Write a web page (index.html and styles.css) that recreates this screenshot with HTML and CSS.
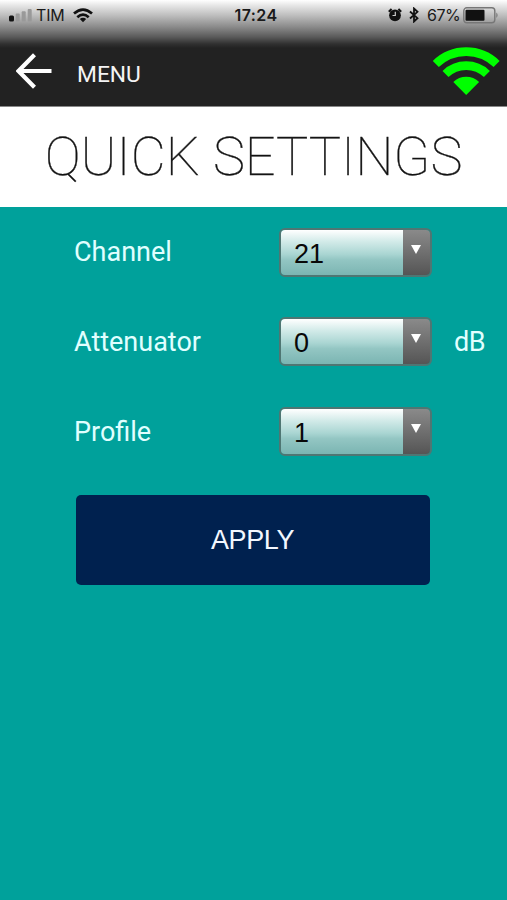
FILE: index.html
```html
<!DOCTYPE html>
<html lang="en">
<head>
<meta charset="utf-8">
<title>Quick Settings</title>
<link rel="stylesheet" href="styles.css">
</head>
<body>
<div class="top">
  <div class="status">
    <div class="status-left">
      <svg class="signal" width="24" height="14" viewBox="0 0 24 14"><rect x="0" y="7.5" width="5" height="6" rx="1.5" fill="#111"/><g fill="#999"><rect x="6.7" y="5.5" width="4" height="8" rx="1"/><rect x="12.7" y="3.2" width="4" height="10.3" rx="1"/><rect x="18.7" y="1" width="4" height="12.5" rx="1"/></g></svg>
      <span class="carrier">TIM</span>
      <svg class="wifi-small" width="20" height="15" viewBox="0 0 20 15"><g fill="none" stroke="#111" stroke-width="2.700"><path d="M1 5.6Q10-2.300 19 5.6"/><path d="M4.3 9.200Q10 4 15.7 9.200"/></g><path d="M6.8 11Q10 8.300 13.200 11L10 14.300Z" fill="#111"/></svg>
    </div>
    <div class="clock">17:24</div>
    <div class="status-right">
      <svg class="alarm" width="14" height="14" viewBox="0 0 14 14"><circle cx="7" cy="7.300" r="5.900" fill="#111"/><path d="M.8 3.800L3.600 1M13.200 3.800L10.400 1" stroke="#111" stroke-width="2"/><path d="M7.300 3.800V7.500H4.500" fill="none" stroke="#ccc" stroke-width="1.200"/></svg>
      <svg class="bluetooth" width="10" height="16" viewBox="0 0 10 16"><path d="M1 4.500L8.500 11.200L5 14.500V1.500L8.500 4.800L1 11.500" fill="none" stroke="#111" stroke-width="1.800"/></svg>
      <span class="percent">67%</span>
      <svg class="battery" width="36" height="17" viewBox="0 0 36 17"><rect x=".8" y=".8" width="31" height="15" rx="3" fill="none" stroke="#777" stroke-width="1.400"/><rect x="2.500" y="2.800" width="19" height="11" rx="1" fill="#111"/><path d="M33.300 5.500Q36 8.200 33.300 11Z" fill="#777"/></svg>
    </div>
  </div>
  <div class="nav">
    <svg class="back" width="36" height="36" viewBox="0 0 36 36"><path d="M35.500 18H2.500M18.500 1.700L2.500 18L18.500 34.300" fill="none" stroke="#fff" stroke-width="4.200"/></svg>
    <span class="menu">MENU</span>
    <svg class="wifi" width="68" height="50" viewBox="432 46 68 50"><g fill="none" stroke="#0f0"><path d="M435.800 64A43.600 43.600 0 0 1 496.600 64" stroke-width="8.600"/><path d="M445.500 74A29.800 29.800 0 0 1 486.900 74" stroke-width="8.600"/></g><path d="M453.300 82A18.300 18.300 0 0 1 479.100 82L466.200 95Z" fill="#0f0"/></svg>
  </div>
</div>
<h1 class="title"><span>QUICK SETTINGS</span></h1>
<main class="form">
  <div class="row"><span class="label">Channel</span><div class="select"><span class="value">21</span><span class="drop"><i class="tri"></i></span></div></div>
  <div class="row"><span class="label">Attenuator</span><div class="select"><span class="value">0</span><span class="drop"><i class="tri"></i></span></div><span class="unit">dB</span></div>
  <div class="row"><span class="label profile">Profile</span><div class="select"><span class="value">1</span><span class="drop"><i class="tri"></i></span></div></div>
  <button class="apply">APPLY</button>
</main>
</body>
</html>
```

FILE: styles.css
```css
* { box-sizing: border-box; }
body { margin: 0; height: 900px; overflow: hidden; background: #00a19b; font-family: Roboto, sans-serif; }
svg { display: block; flex: none; }
.top { height: 107px; border-bottom: 1px solid #888; background: linear-gradient(#fff 0, #e4e4e4 6px, #bbb 16px, #8a8a8a 27px, #5a5a5a 37px, #303030 44px, #222 48px); }
.status { height: 45px; padding-top: 4px; display: grid; grid-template-columns: 200px 112px 1fr; color: #1a1a1a; font-family: Inter, sans-serif; font-size: 16px; line-height: 22px; }
.status-left { display: flex; height: 22px; padding-left: 9px; align-items: center; }
.carrier { width: 29px; margin-left: 3px; letter-spacing: -.2px; }
.wifi-small { margin-left: 8px; }
.clock { text-align: center; font-weight: 600; font-size: 16px; letter-spacing: .4px; }
.status-right { display: flex; height: 22px; align-items: center; padding-left: 76px; }
.bluetooth { margin-left: 7px; }
.percent { width: 33px; margin-left: 8px; letter-spacing: -.5px; }
.battery { margin-left: 3px; }
.nav { display: flex; height: 61px; padding: 0 7px 0 16px; }
.back { margin-top: 8px; }
.menu { flex: 1; margin: 15px 0 0 25px; color: #f4f4f4; font-size: 22.800px; line-height: 30px; }
.wifi { margin-top: 1px; }
.title { margin: 0; height: 100px; padding-top: 18px; background: #fff; color: #111; font-size: 54px; font-weight: 100; line-height: 64px; text-align: center; white-space: nowrap; -webkit-text-stroke: .35px #222; }
.form { padding: 21px 0 0 74px; }
.row { display: flex; align-items: center; height: 48px; margin-bottom: 41.700px; color: #e0ffff; font-size: 27px; }
.label { width: 205px; }
.profile { padding-top: 1px; }
.select { display: flex; width: 153px; height: 49px; flex: none; border: 2px solid #4f7673; border-radius: 6px; overflow: hidden; }
.value { flex: 1; padding: 2px 0 0 13px; background: linear-gradient(#fff, #d3ebe9 25%, #a9d5d2 54%, #93c6c3 66%, #7bb5b2); color: #080808; font-family: "Liberation Sans", sans-serif; font-size: 27px; line-height: 44px; }
.drop { width: 27px; display: flex; justify-content: center; padding-top: 15px; background: linear-gradient(#8a8a8a, #555); }
.tri { width: 0; height: 0; margin-right: 2px; border: 5px solid transparent; border-top: 9px solid #fff; border-bottom: 0; }
.unit { margin-left: 22px; letter-spacing: -.5px; }
.apply { display: block; width: 354px; height: 90px; margin: -2px 0 0 2px; padding: 0 1px 0 0; border: 0; border-radius: 5px; background: #00214f; color: #f2f7ff; font: 27px "Liberation Sans", sans-serif; letter-spacing: -.4px; }
```
